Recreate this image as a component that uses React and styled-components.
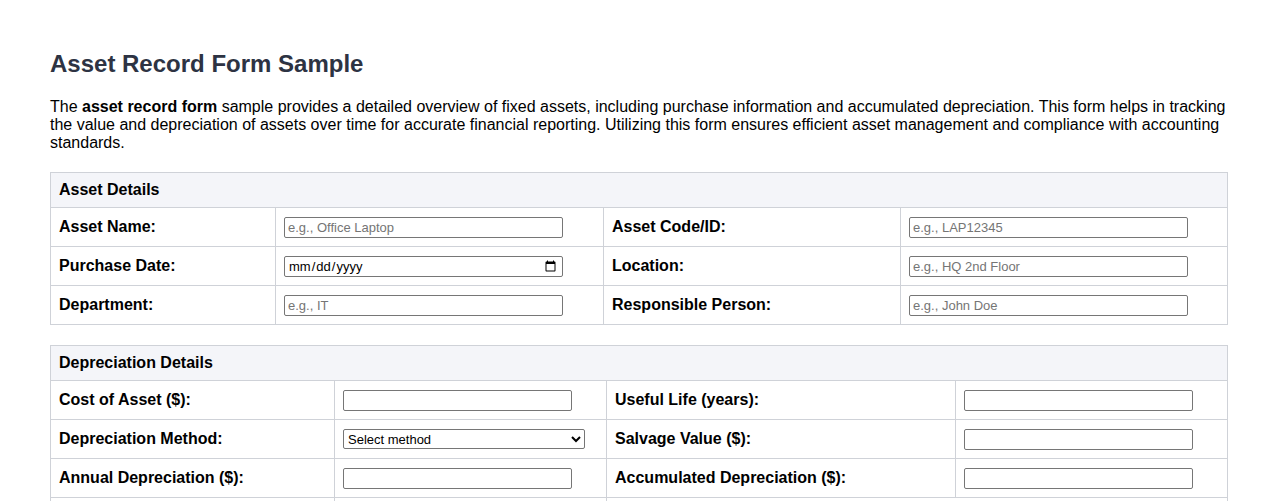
import React from 'react';
import styled, { createGlobalStyle } from 'styled-components';

const Global = createGlobalStyle`
  body { margin: 0; font-family: "Liberation Sans", Arial, sans-serif; color: #000; background: #fff; }
`;

const Page = styled.div`
  padding: 28px 50px 20px 50px;
`;

const Title = styled.h1`
  font-size: 24px;
  font-weight: bold;
  color: #2d3343;
  margin: 22px 0 20px;
`;

const Intro = styled.p`
  font-size: 16px;
  line-height: 18px;
  margin: 0 0 20px;
`;

const Table = styled.table`
  width: 1177px;
  border-collapse: collapse;
  table-layout: fixed;
  margin-bottom: 20px;
  font-size: 16px;
`;

const HeadCell = styled.th`
  background: #f4f5f9;
  border: 1px solid #cfd2d8;
  text-align: left;
  padding: 0 8px;
  height: 34px;
  font-weight: bold;
`;

const Label = styled.td`
  border: 1px solid #cfd2d8;
  padding: 0 8px 1px;
  height: 37px;
  font-weight: bold;
`;

const Cell = styled.td`
  border: 1px solid #cfd2d8;
  padding: 0 8px;
  height: 37px;
`;

const Input = styled.input`
  box-sizing: border-box;
  width: ${p => p.$w}px;
  height: 21px;
  border: 1px solid #767676;
  border-radius: 2px;
  padding: 1px 3px;
  font-family: "Liberation Sans", Arial, sans-serif;
  font-size: 13px;
  display: block;
  &::placeholder { color: #757575; }
`;

const Select = styled.select`
  box-sizing: border-box;
  width: 242px;
  height: 20px;
  font-family: "Liberation Sans", Arial, sans-serif;
  font-size: 13px;
  border: 1px solid #767676;
  border-radius: 2px;
  background: #fff;
  display: block;
`;

const assetRows = [
  ['Asset Name:', 'e.g., Office Laptop', 'Asset Code/ID:', 'e.g., LAP12345'],
  ['Purchase Date:', 'date', 'Location:', 'e.g., HQ 2nd Floor'],
  ['Department:', 'e.g., IT', 'Responsible Person:', 'e.g., John Doe'],
];

const field = (ph, w) =>
  ph === 'date' ? <Input $w={w} type="date" /> : <Input $w={w} placeholder={ph} />;

export default function App() {
  return (
    <Page>
      <Global />
      <Title>Asset Record Form Sample</Title>
      <Intro>
        The <b>asset record form</b> sample provides a detailed overview of fixed assets, including purchase information and accumulated depreciation. This form helps in tracking the value and depreciation of assets over time for accurate financial reporting. Utilizing this form ensures efficient asset management and compliance with accounting standards.
      </Intro>

      <Table>
        <colgroup>
          <col style={{ width: 225 }} /><col style={{ width: 328 }} />
          <col style={{ width: 297 }} /><col style={{ width: 327 }} />
        </colgroup>
        <thead><tr><HeadCell colSpan={4}>Asset Details</HeadCell></tr></thead>
        <tbody>
          {assetRows.map(r => (
            <tr key={r[0]}>
              <Label>{r[0]}</Label><Cell>{field(r[1], 279)}</Cell>
              <Label>{r[2]}</Label><Cell>{field(r[3], 279)}</Cell>
            </tr>
          ))}
        </tbody>
      </Table>

      <Table>
        <colgroup>
          <col style={{ width: 284 }} /><col style={{ width: 272 }} />
          <col style={{ width: 349 }} /><col style={{ width: 272 }} />
        </colgroup>
        <thead><tr><HeadCell colSpan={4}>Depreciation Details</HeadCell></tr></thead>
        <tbody>
          <tr>
            <Label>Cost of Asset ($):</Label><Cell><Input $w={229} /></Cell>
            <Label>Useful Life (years):</Label><Cell><Input $w={229} /></Cell>
          </tr>
          <tr>
            <Label>Depreciation Method:</Label>
            <Cell>
              <Select defaultValue="">
                <option value="">Select method</option>
                <option>Straight Line</option>
                <option>Declining Balance</option>
              </Select>
            </Cell>
            <Label>Salvage Value ($):</Label><Cell><Input $w={229} /></Cell>
          </tr>
          <tr>
            <Label>Annual Depreciation ($):</Label><Cell><Input $w={229} /></Cell>
            <Label>Accumulated Depreciation ($):</Label><Cell><Input $w={229} /></Cell>
          </tr>
          <tr>
            <Label>Net Book Value ($):</Label><Cell><Input $w={229} /></Cell>
            <Cell colSpan={2} />
          </tr>
        </tbody>
      </Table>
    </Page>
  );
}
